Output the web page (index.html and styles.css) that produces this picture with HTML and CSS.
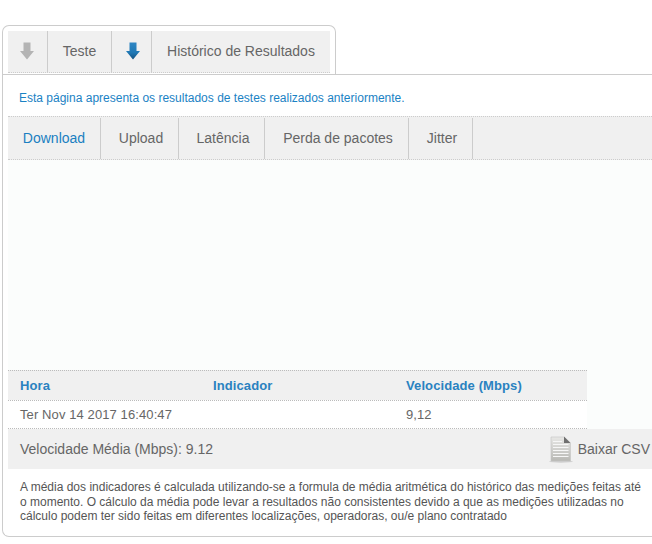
FILE: index.html
```html
<!DOCTYPE html>
<html lang="pt">
<head>
<meta charset="utf-8">
<title>Histórico de Resultados</title>
<link rel="stylesheet" href="styles.css">
</head>
<body>
<div class="tabs-outline">
  <nav class="tabs">
    <a class="tab tab-icon tab-icon-idle"><svg width="16" height="18" viewBox="0 0 16 18"><path d="M4.500 0.500H11.500V9H15L8 17.500L1 9H4.500Z" fill="#b4b4b4"/></svg></a>
    <a class="tab tab-text tab-teste">Teste</a>
    <a class="tab tab-icon tab-icon-active"><svg width="16" height="18" viewBox="0 0 16 18"><defs><linearGradient id="blue" x1="0" y1="0" x2="0" y2="1"><stop offset="0" stop-color="#2f86c4"/><stop offset="0.6" stop-color="#1f78b4"/><stop offset="1" stop-color="#14507f"/></linearGradient></defs><path d="M4.500 0.500H11.500V9H15L8 17.500L1 9H4.500Z" fill="url(#blue)"/></svg></a>
    <a class="tab tab-text tab-hist">Histórico de Resultados</a>
  </nav>
</div>
<main class="panel">
  <p class="intro">Esta página apresenta os resultados de testes realizados anteriormente.</p>
  <nav class="subtabs">
    <a class="subtab active sub-1">Download</a>
    <a class="subtab sub-2">Upload</a>
    <a class="subtab sub-3">Latência</a>
    <a class="subtab sub-4">Perda de pacotes</a>
    <a class="subtab sub-5">Jitter</a>
  </nav>
  <div class="chart-area">
    <div class="chart"></div>
    <div class="table">
      <div class="row head"><span>Hora</span><span>Indicador</span><span>Velocidade (Mbps)</span></div>
      <div class="row body"><span>Ter Nov 14 2017 16:40:47</span><span></span><span>9,12</span></div>
    </div>
  </div>
  <div class="average">
    <span>Velocidade Média (Mbps): 9.12</span>
    <a class="csv">
      <svg width="24" height="27" viewBox="0 0 24 27">
        <defs><linearGradient id="doc" x1="0" y1="0" x2="0" y2="1"><stop offset="0" stop-color="#e8e8e6"/><stop offset="1" stop-color="#b8b8b4"/></linearGradient></defs>
        <ellipse cx="12" cy="25.500" rx="12" ry="1.200" fill="#d0d0d0"/>
        <path d="M2 1H15L21.500 7V25H2Z" fill="url(#doc)" stroke="#c4c4c2" stroke-width="0.600"/>
        <path d="M15 0.500L21.500 7H15Z" fill="#6f6f6f"/>
        <path d="M4 5.500H13M4 8.500H19.500M4 11.500H19.500M4 14.500H19.500M4 17.500H19.500M4 20.500H19.500" stroke="#f6f6f6" stroke-width="1"/>
      </svg>
      <span>Baixar CSV</span>
    </a>
  </div>
  <p class="note">A média dos indicadores é calculada utilizando-se a formula de média aritmética do histórico das medições feitas até o momento. O cálculo da média pode levar a resultados não consistentes devido a que as medições utilizadas no cálculo podem ter sido feitas em diferentes localizações, operadoras, ou/e plano contratado</p>
</main>
</body>
</html>
```
FILE: styles.css
```css
html, body {
  margin: 0;
  padding: 0;
  background: #fff;
  overflow: hidden;
}
body {
  font-family: "Liberation Sans", Arial, sans-serif;
  font-size: 14px;
  color: #666;
  height: 544px;
}
.tabs-outline {
  box-sizing: border-box;
  margin: 25px 0 0 2px;
  width: 334px;
  height: 49px;
  padding: 5px 5px 0;
  border: 1px solid #ccc;
  border-bottom: 0;
  border-radius: 7px 7px 0 0;
}
.tabs {
  display: flex;
  height: 42px;
  background: #f0f0f0;
  border-bottom: 1px dotted #ccc;
  box-sizing: border-box;
}
.tab {
  display: flex;
  align-items: center;
  justify-content: center;
  box-sizing: border-box;
  height: 41px;
  padding-bottom: 2px;
  border-right: 1px solid #ccc;
}
.tab-icon { width: 40px; padding-bottom: 1px; }
.tab-icon-idle { padding-right: 2px; }
.tab-icon-active { padding-left: 2px; }
.tab-teste { width: 64px; }
.tab-hist { flex: 1; border-right: 0; }
.panel {
  box-sizing: border-box;
  margin-left: 2px;
  height: 463px;
  border: 1px solid #ccc;
  border-right: 0;
  border-radius: 0 0 0 7px;
  padding: 0 0 0 5px;
}
.intro {
  margin: 0;
  height: 41px;
  padding: 16px 0 0 11px;
  box-sizing: border-box;
  font-size: 12px;
  line-height: 15px;
  color: #1a82c4;
}
.subtabs {
  display: flex;
  height: 44px;
  box-sizing: border-box;
  background: #f0f0f0;
  border-top: 1px dotted #ccc;
  border-bottom: 1px dotted #ccc;
}
.subtab {
  display: flex;
  align-items: center;
  justify-content: center;
  box-sizing: border-box;
  border-right: 1px solid #ccc;
  height: 41px;
  margin-top: 1px;
  padding-bottom: 2px;
}
.sub-1 { width: 93px; }
.sub-2 { width: 78px; padding-left: 3px; }
.sub-3 { width: 86px; padding-left: 3px; }
.sub-4 { width: 144px; padding-left: 3px; }
.sub-5 { width: 64px; padding-left: 3px; }
.active { color: #1a7fc1; }
.chart-area { background: #fbfdfc; }
.chart { height: 210px; }
.table { width: 579px; background: #fff; }
.row {
  display: grid;
  grid-template-columns: repeat(3, 193px);
  align-items: center;
  border-top: 1px dotted #bbb;
  box-sizing: border-box;
  font-size: 13px;
  letter-spacing: 0.1px;
}
.row span { padding-left: 12px; }
.head {
  height: 30px;
  background: #f0f0f0;
  font-weight: bold;
  color: #2a82c0;
}
.body {
  height: 29px;
  border-bottom: 1px dotted #bbb;
}
.average {
  display: flex;
  align-items: center;
  justify-content: space-between;
  height: 40px;
  padding-left: 12px;
  padding-right: 2px;
  background: #f0f0f0;
}
.csv {
  display: flex;
  align-items: center;
  gap: 5px;
}
.note {
  margin: 0;
  padding: 11px 0 0 12px;
  width: 625px;
  font-size: 12px;
  line-height: 14.500px;
  color: #555;
}
```
